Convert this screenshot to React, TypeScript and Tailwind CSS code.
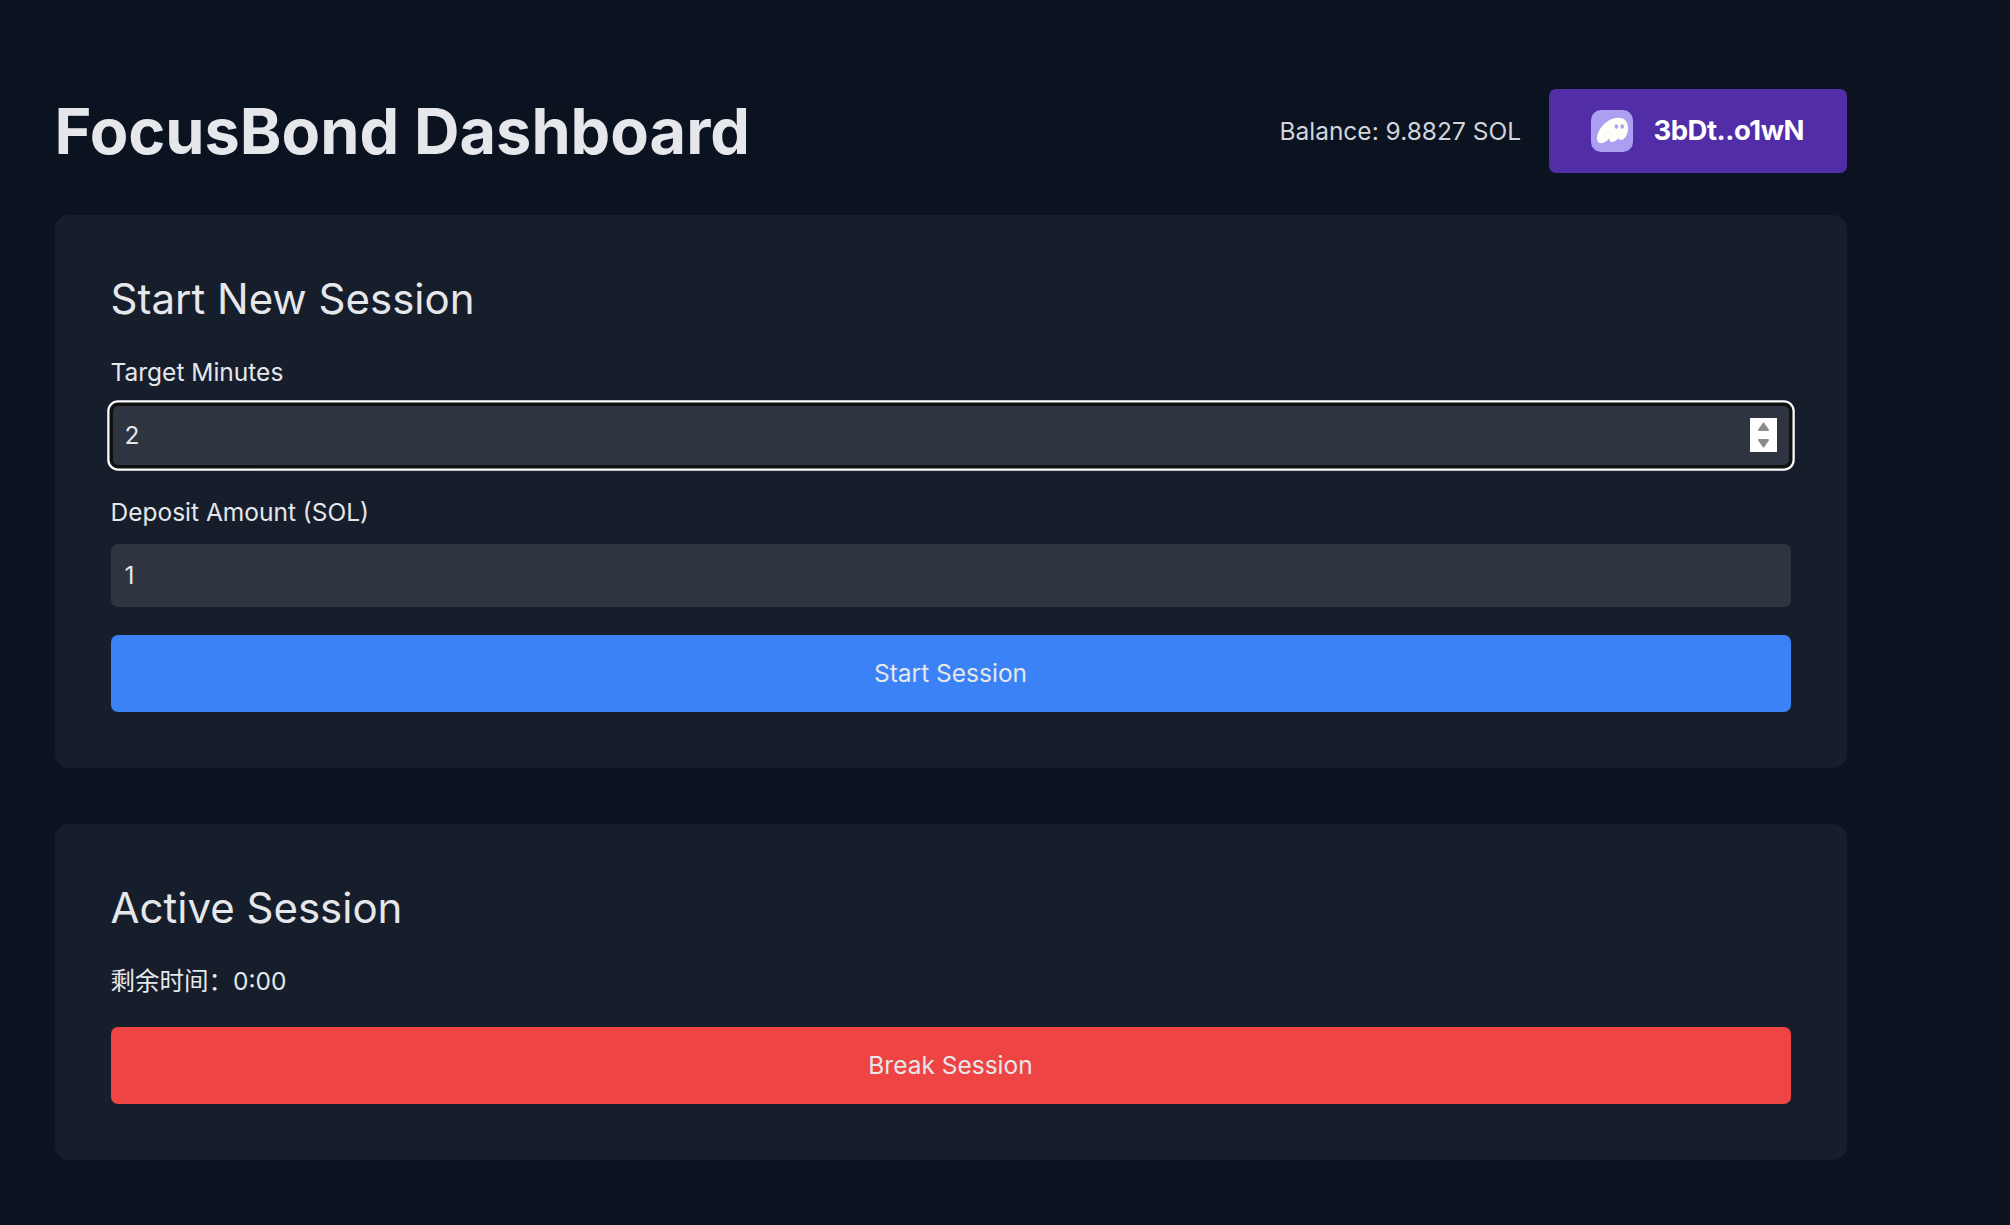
import React from "react";

const card = "rounded-[14px] bg-[#171e2b] p-[56px]";
const heading = "mb-[28px] -ml-[0.5px] text-[42px] leading-[56px]";
const label = "mb-[14px] -ml-[0.5px] block text-[24.5px] leading-[35px]";
const field =
  "flex h-[63px] items-center justify-between rounded-[7px] bg-[#2e3440] pl-[13.5px] pr-[14px] text-[24.5px] leading-[35px]";
const action =
  "block h-[77px] w-full rounded-[7px] pr-[1px] text-center text-[24.5px] leading-[35px]";

function GhostIcon() {
  return (
    <svg width="42" height="42" viewBox="0 0 42 42">
      <rect width="42" height="42" rx="10" fill="#ab9ff2" />
      <path
        d="M18.2 28.3C16.2 31.3 13 33.2 10.1 33.2C7.6 33.2 6 31.7 6 28.5C6 20.4 15.4 7.8 27.4 7.8C34.2 7.8 37 12.3 37 18C37 25.2 33.3 30 29.8 30C28.6 30 27.6 29.5 27.3 28.3C25.8 30.2 23.5 32 21.3 32C19.2 32 18.1 30.4 18.2 28.3Z"
        fill="#fffdf8"
      />
      <ellipse cx="25.4" cy="16.5" rx="1.75" ry="2.2" fill="#ab9ff2" />
      <ellipse cx="31.2" cy="16.5" rx="1.75" ry="2.2" fill="#ab9ff2" />
    </svg>
  );
}

function Spinner() {
  return (
    <svg className="-mt-[1px]" width="27" height="34" viewBox="0 0 27 34">
      <rect width="27" height="34" fill="#fff" />
      <g fill="#8b8b8b" stroke="#8b8b8b" strokeWidth="2" strokeLinejoin="round">
        <path d="M13.5 5.5L18 12H9Z" />
        <path d="M13.5 28.5L18 22H9Z" />
      </g>
    </svg>
  );
}

export default function App() {
  return (
    <div className="h-[1225px] bg-[#0b1220] pt-[89px] pr-[163px] pl-[55px] font-['Inter','Noto_Sans_CJK_SC',sans-serif] text-[#e5e7eb]">
      <header className="mb-[42px] flex h-[84px] items-center justify-between">
        <h1 className="-ml-[0.5px] text-[63px] leading-[70px] font-bold">FocusBond Dashboard</h1>
        <div className="flex items-center gap-[28px]">
          <span className="text-[24.5px] leading-[35px] text-[#d1d5db]">Balance: 9.8827 SOL</span>
          <button className="flex h-[84px] w-[298px] items-center gap-[20.5px] rounded-[7px] bg-[#512da8] pl-[42px] text-[27.5px] font-bold text-white">
            <GhostIcon />
            <span className="-mt-[1px] tracking-[-0.5px]">3bDt..o1wN</span>
          </button>
        </div>
      </header>
      <section className={card}>
        <h2 className={heading}>Start New Session</h2>
        <div className={label}>Target Minutes</div>
        <div
          className={`${field} mb-[28px] shadow-[inset_0_0_0_2px_#101010,0_0_0_1.5px_#101010,0_0_0_3.75px_#fff]`}
        >
          <span>2</span>
          <Spinner />
        </div>
        <div className={label}>Deposit Amount (SOL)</div>
        <div className={`${field} mb-[28px]`}>
          <span>1</span>
        </div>
        <button className={`${action} bg-[#3b82f6]`}>Start Session</button>
      </section>
      <section className={`${card} mt-[56px]`}>
        <h2 className={heading}>Active Session</h2>
        <p className="mb-[28px] -ml-[0.5px] text-[24.5px] leading-[35px]">剩余时间：0:00</p>
        <button className={`${action} bg-[#ef4444]`}>Break Session</button>
      </section>
    </div>
  );
}
